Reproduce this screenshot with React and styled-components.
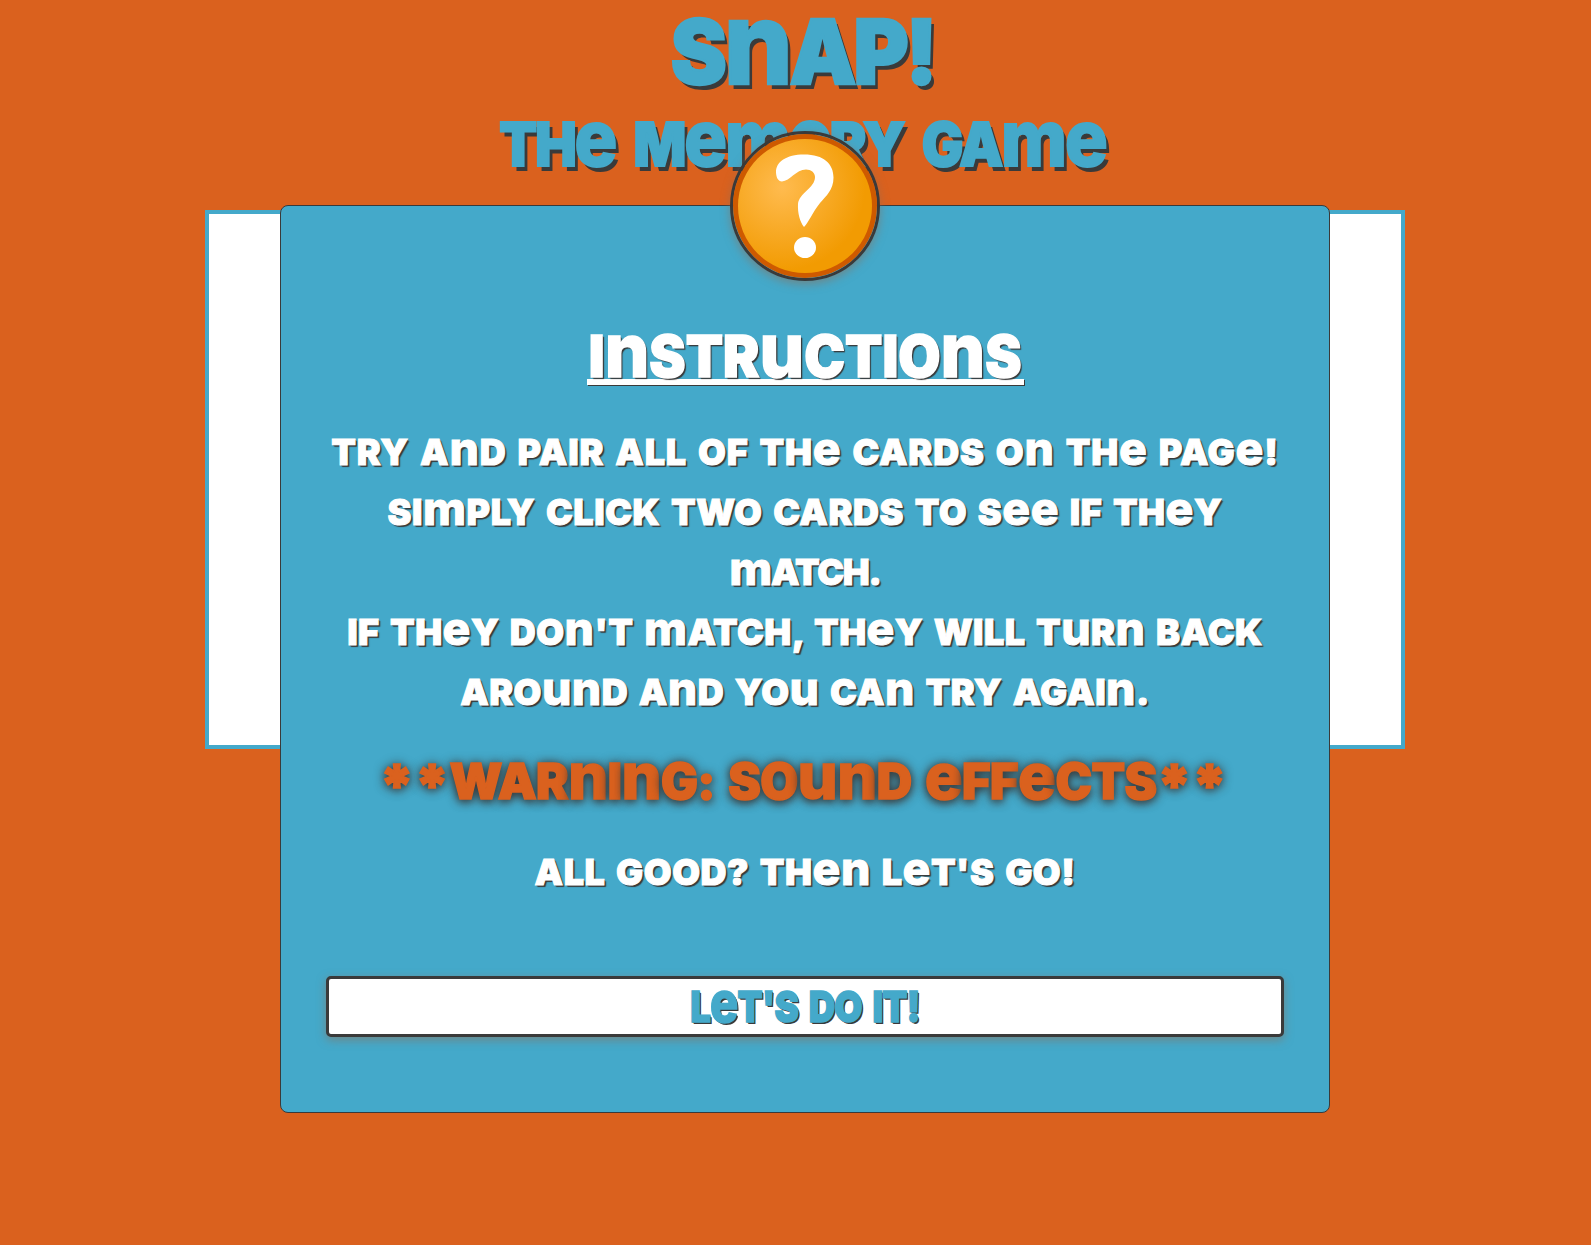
import React from "react";
import styled, { createGlobalStyle } from "styled-components";

const ink = "#3a3a3a";
const blue = "#44a9ca";
const orange = "#da611e";

const Global = createGlobalStyle`
  *, *::before, *::after { box-sizing: border-box; }
  html { overflow: hidden; background: ${orange}; }
  body { margin: 0; background: ${orange}; }
`;

const Page = styled.div`
  position: relative;
  width: 1610px;
  height: 1245px;
  font-family: Inter, "Open Sans", sans-serif;
  font-weight: 900;
  color: #fff;
`;

const Tall = styled.span`
  font-size: 1.29em;
  font-weight: 850;
  line-height: 0;
`;

const Star = styled.span`
  font-size: 1.2em;
  line-height: 0;
  vertical-align: -0.13em;
`;

const Line = styled.span`
  display: block;
  width: max-content;
  margin: 0 auto;
  white-space: nowrap;
  letter-spacing: ${(p) => p.$track || 0}px;
  word-spacing: ${(p) => p.$gap || 0}px;
  transform: ${(p) => (p.$squeeze ? `scaleX(${p.$squeeze})` : "none")};
`;

const Title = styled.h1`
  margin: 0;
  padding-right: 5px;
  height: 102px;
  font-size: 89px;
  line-height: 104px;
  font-weight: 900;
  color: ${blue};
  text-shadow: 4px 5px 0 ${ink};
  -webkit-text-stroke: 2.5px ${blue};
`;

const Subtitle = styled.h2`
  margin: 0;
  padding-right: 4px;
  height: 108px;
  font-size: 60px;
  line-height: 85px;
  font-weight: 900;
  color: ${blue};
  text-shadow: 4px 5px 0 ${ink};
  -webkit-text-stroke: 2px ${blue};
`;

const Board = styled.main`
  width: 1200px;
  height: 539px;
  margin: 0 auto;
  border: 4px solid ${blue};
  background: #fff;
`;

const Modal = styled.section`
  position: absolute;
  top: 205px;
  left: 280px;
  width: 1050px;
  height: 908px;
  padding: 107px 45px 0;
  border: 1px solid ${ink};
  border-radius: 8px;
  background: ${blue};
`;

const Badge = styled.div`
  position: absolute;
  top: -75px;
  left: 449px;
  width: 150px;
  height: 150px;
  border: 3px solid ${ink};
  border-radius: 50%;
  box-shadow: 0 3px 10px rgba(140, 110, 90, 0.6);

  svg { display: block; width: 144px; height: 144px; }
`;

const Heading = styled.h3`
  margin: 0;
  height: 109px;
  font-size: 58px;
  font-weight: 900;
  line-height: 86px;
  text-shadow: 1px 1px 1px ${ink}, 2px 2px 1px ${ink};
  -webkit-text-stroke: 1.5px #fff;
`;

const Underlined = styled.span`
  display: flex;
  flex-direction: column;
  align-items: center;
  height: 73px;

  &::after {
    content: "";
    flex: none;
    width: 437px;
    height: 6px;
    margin-top: -20px;
    background: #fff;
    box-shadow: 1px 1px 0 ${ink};
  }
`;

const Copy = styled.p`
  margin: 0 0 ${(p) => p.$below || 0}px;
  font-size: 36px;
  line-height: 60px;
  text-shadow: 1px 1px 1px ${ink}, 2px 2px 1px ${ink};
  -webkit-text-stroke: 1px #fff;
`;

const Warning = styled.p`
  margin: 0 0 30px;
  padding-right: 4px;
  font-size: 49px;
  line-height: 60px;
  color: ${orange};
  text-shadow: 0 1px 12px ${ink}, 0 2px 10px ${ink};
  -webkit-text-stroke: 1.5px ${orange};
`;

const Start = styled.button`
  display: block;
  width: 958px;
  height: 61px;
  padding: 0;
  border: 3px solid ${ink};
  border-radius: 5px;
  background: #fff;
  font: inherit;
  font-size: 43px;
  line-height: 55px;
  color: ${blue};
  text-shadow: 1px 1px 0 ${ink}, 2px 2px 0 ${ink};
  -webkit-text-stroke: 1.5px ${blue};
  box-shadow: 0 3px 10px rgba(140, 110, 90, 0.6);
`;

function Lettering({ text, track, gap, squeeze }) {
  return (
    <Line $track={track} $gap={gap} $squeeze={squeeze}>
      {text.split(/([enmu]+|\*+)/).map((part, i) => {
        if (/^[enmu]+$/.test(part)) return <Tall key={i}>{part}</Tall>;
        if (/^\*+$/.test(part)) return <Star key={i}>{part}</Star>;
        return part.toUpperCase();
      })}
    </Line>
  );
}

function HelpIcon() {
  return (
    <svg viewBox="0 0 144 144">
      <defs>
        <radialGradient id="glow" cx="0.33" cy="0.36" r="0.62">
          <stop offset="0" stopColor="#ffbb4f" />
          <stop offset="1" stopColor="#f29b02" />
        </radialGradient>
      </defs>
      <circle cx="72" cy="72" r="72" fill="#ce5a00" />
      <circle cx="72" cy="72" r="67" fill="url(#glow)" />
      <path
        d="M43 38C43 28 53 20.500 71 20.500C91 20.500 100.500 30 100.500 43.500C100.500 56 93 62 87 69C79 79 76 88 71 93C67 88 64.500 79 65 70C66 59 82 54 82 43C82 38.500 78 35.500 73 35.500C63 35.500 57 47 49 47.500C45 47.500 43 43 43 38Z"
        fill="#fff"
      />
      <ellipse cx="72" cy="113.500" rx="11" ry="10.600" fill="#fff" />
    </svg>
  );
}

export default function App() {
  return (
    <Page>
      <Global />
      <Title><Lettering text="Snap!" track={-3.2} squeeze={0.945} /></Title>
      <Subtitle><Lettering text="The Memory Game" track={-2.2} gap={10} squeeze={0.92} /></Subtitle>
      <Board />
      <Modal>
        <Badge><HelpIcon /></Badge>
        <Heading><Underlined><Lettering text="Instructions" squeeze={0.94} /></Underlined></Heading>
        <Copy $below={30}>
          <Lettering text="Try and pair all of the cards on the page!" track={0.8} gap={3} />
          <Lettering text="Simply click two cards to see if they" track={0.5} gap={3} />
          <Lettering text="match." track={-1.3} />
          <Lettering text="If they don't match, they will turn back" track={0.4} gap={3} />
          <Lettering text="around and you can try again." track={0.4} gap={3} />
        </Copy>
        <Warning><Lettering text="**Warning: Sound effects**" track={-0.6} gap={4} /></Warning>
        <Copy $below={74}><Lettering text="All good? Then let's go!" track={0.5} gap={3} /></Copy>
        <Start><Lettering text="Let's do it!" track={-1} gap={5} squeeze={0.85} /></Start>
      </Modal>
    </Page>
  );
}
